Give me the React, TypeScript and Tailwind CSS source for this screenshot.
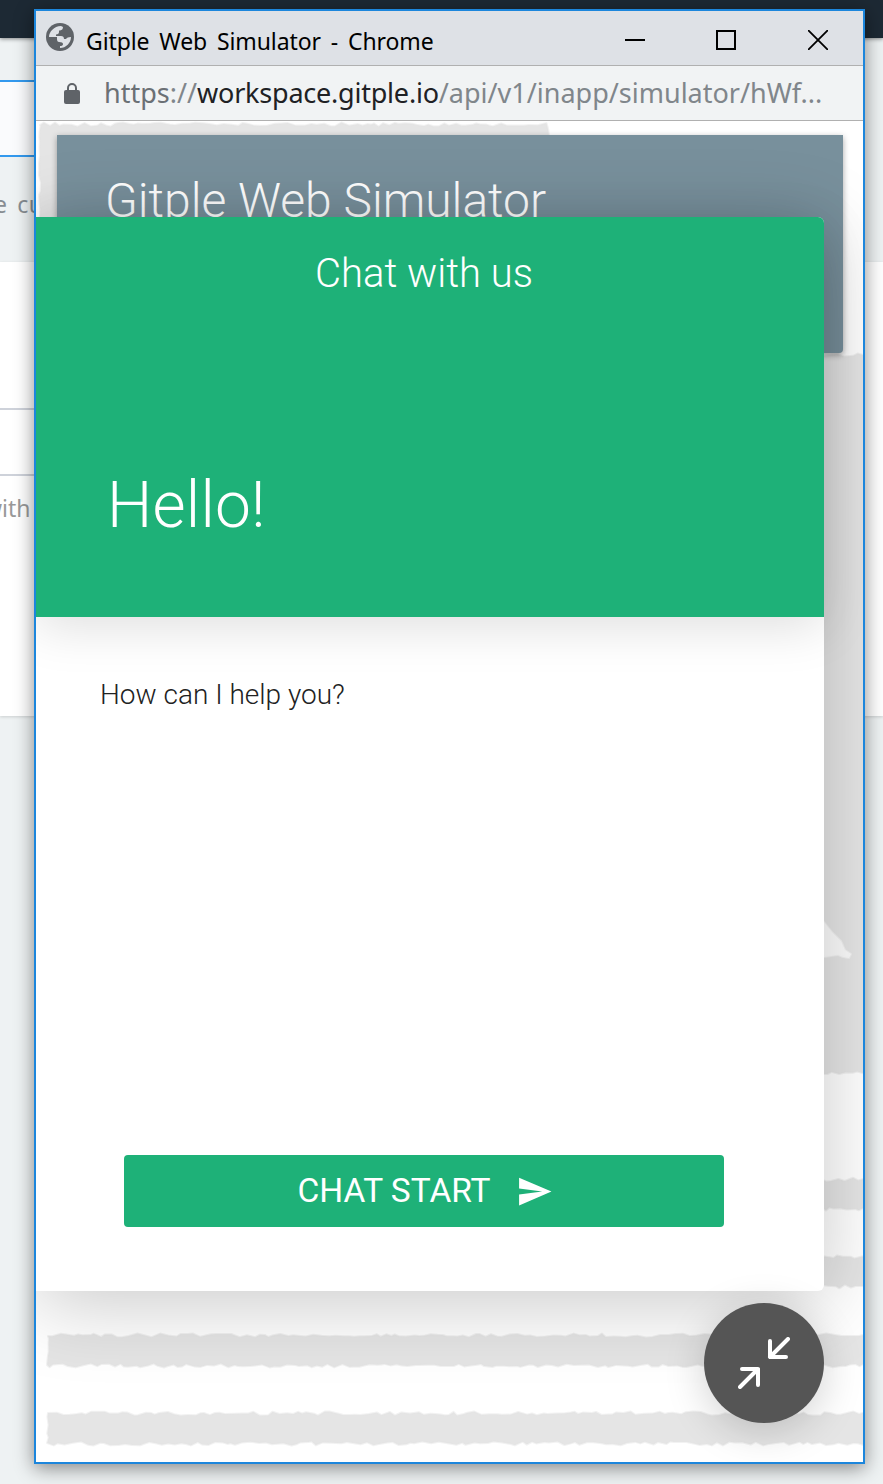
import React from 'react';
import { MdSend } from 'react-icons/md';

// Deterministic torn-paper outline of a rectangle.
function torn(x0: number, y0: number, x1: number, y1: number, seed: number): string {
  let s = seed * 7919;
  const rnd = () => {
    s = (s * 16807) % 2147483647;
    return s / 2147483647;
  };
  const pts: string[] = [];
  const j = () => (rnd() - 0.5) * 4;
  for (let x = x0; x < x1; x += 3 + rnd() * 6) pts.push(`${x.toFixed(1)},${(y0 + 1.5 + j()).toFixed(1)}`);
  for (let y = y0 + 2; y < y1 - 2; y += 3 + rnd() * 6) pts.push(`${(x1 + j()).toFixed(1)},${y.toFixed(1)}`);
  for (let x = x1; x > x0; x -= 3 + rnd() * 6) pts.push(`${x.toFixed(1)},${(y1 - 1.5 + j()).toFixed(1)}`);
  for (let y = y1 - 2; y > y0 + 2; y -= 3 + rnd() * 6) pts.push(`${(x0 + j() / 2).toFixed(1)},${y.toFixed(1)}`);
  return pts.join(' ');
}

const sheets: [number, number, number, number, number][] = [
  [4, 2, 512, 160, 11],
  [12, 233, 836, 954, 23],
  [12, 1057, 836, 1089, 37],
  [12, 1135, 836, 1167, 41],
  [12, 1213, 836, 1246, 59],
  [12, 1291, 836, 1324, 71],
];

function Sketch() {
  return (
    <svg className="absolute inset-0 h-full w-full" viewBox="0 0 827 1341" preserveAspectRatio="none">
      <g fill="#e5e5e5" stroke="#e5e5e5" strokeOpacity=".5" strokeWidth="2" strokeLinejoin="round">
        {sheets.map((s) => (
          <polygon key={s[4]} points={torn(...s)} />
        ))}
      </g>
      <path d="M770 780 L788 801 L796 811 L805 820 L809 829 L815 833 L813 837 L807 836 L802 834 L788 836 L760 836 Z" fill="#fcfcfc" stroke="#fcfcfc" strokeOpacity=".5" strokeWidth="2" strokeLinejoin="round" />
    </svg>
  );
}

function Backdrop() {
  return (
    <div className="flex h-full flex-col bg-[#eef2f3]">
      <div className="h-[38px] shrink-0 bg-[#1d2934] shadow-[0_1px_4px_rgba(0,0,0,0.45)]" />
      <div className="mt-[42px] h-[77px] w-[400px] shrink-0 border-y-2 border-[#3399ee] bg-[#fafbfd]" />
      <p className="-ml-[6px] mt-[31px] h-[33px] shrink-0 whitespace-nowrap font-['Noto_Sans'] text-[23px] leading-[32px] tracking-[0.6px] text-[#878d92] [word-spacing:3px]">
        e cu
      </p>
      <div className="mt-[41px] h-[454px] shrink-0 bg-white pt-[146px] shadow-[0_1px_3px_rgba(0,0,0,0.15)]">
        <div className="h-[68px] w-[400px] border-y-2 border-[#ced2da]" />
        <p className="-ml-[16px] mt-[16px] whitespace-nowrap font-['Noto_Sans'] text-[23px] leading-[32px] text-[#999]">
          with
        </p>
      </div>
    </div>
  );
}

function TitleBar() {
  return (
    <div className="flex h-[55px] shrink-0 items-center border-b border-[#b0b0b0] bg-[#dee1e6] pl-[10px]">
      <svg className="-mt-[2px] size-[28px]" viewBox="0 0 28 28">
        <circle cx="14" cy="14" r="14" fill="#5f6368" />
        <path d="M3 14C3 9 8 3 15 3L17 4Q17 7 14 7.5H13V9Q13 11 10 11.5V13H15Q18 13 18 16H20Q21 14 25 14C25 20 20 25 14 25V23Q17 23 17 21Q17 19 13 19Q11 19 11 16V14Z" fill="#dee1e6" />
      </svg>
      <h1 className="ml-[12px] mt-[5px] grow whitespace-nowrap font-['Noto_Sans'] text-[23px] leading-[32px] tracking-[-0.1px] text-black [word-spacing:4px]">
        Gitple Web Simulator - Chrome
      </h1>
      <div className="mr-[35px] mt-[4px] flex items-center">
        <svg className="mr-[71px] size-[20px]" viewBox="0 0 20 20"><path d="M0 10h20" stroke="#000" strokeWidth="2" /></svg>
        <svg className="mr-[72px] size-[20px]" viewBox="0 0 20 20"><path d="M1 1h18v18H1z" fill="none" stroke="#000" strokeWidth="2" /></svg>
        <svg className="size-[20px]" viewBox="0 0 20 20"><path d="M0 0l20 20M20 0L0 20" stroke="#000" strokeWidth="1.8" /></svg>
      </div>
    </div>
  );
}

function AddressBar() {
  return (
    <div className="flex h-[55px] shrink-0 items-center border-b border-[#b0b0b0] bg-[#f1f3f4] pl-[28px]">
      <svg className="h-[21px] w-[16px]" viewBox="0 0 16 21">
        <rect y="7" width="16" height="14" rx="2" fill="#5f6368" />
        <path d="M4 8V5a4 4 0 0 1 8 0v3" fill="none" stroke="#5f6368" strokeWidth="2" />
      </svg>
      <p className="ml-[24px] whitespace-nowrap font-['Noto_Sans'] text-[27px] leading-[36px] text-[#80868b]">
        <span className="text-[#6b7075]">https</span>://<span className="tracking-[-0.22px] text-[#202124]">workspace.gitple.io</span>/api/v1/inapp/simulator/hWf...
      </p>
    </div>
  );
}

function ChatWidget() {
  return (
    <section className="absolute left-0 top-[96px] flex h-[1074px] w-[788px] flex-col rounded-r-[6px] bg-white shadow-[0_12px_80px_rgba(0,0,0,0.22)]">
      <header className="h-[400px] shrink-0 rounded-tr-[6px] bg-[#1eb178] text-white shadow-[0_10px_50px_rgba(0,0,0,0.13)]">
        <h2 className="pr-[12px] pt-[33px] text-center font-[Roboto] text-[40px] font-light leading-[48px]">Chat with us</h2>
        <p className="pl-[71px] pt-[168px] font-[Roboto] text-[64px] font-light leading-[80px] tracking-[0.2px]">Hello!</p>
      </header>
      <p className="grow pl-[64px] pt-[61px] font-[Roboto] text-[28px] font-light leading-[34px] text-[#222]">How can I help you?</p>
      <button className="mb-[64px] ml-[88px] flex h-[72px] w-[600px] shrink-0 items-center justify-center rounded-[4px] bg-[#1eb178] pl-[2px] font-[Roboto] text-[33.5px] leading-[40px] text-white">
        CHAT START
        <MdSend className="ml-[25px] size-[37px]" />
      </button>
    </section>
  );
}

export default function App() {
  return (
    <main className="relative h-[1484px] w-[883px] overflow-hidden">
      <Backdrop />
      <div className="absolute left-[34px] top-[9px] flex h-[1455px] w-[831px] flex-col border-2 border-[#1c86dc] bg-white shadow-[0_4px_18px_rgba(0,0,0,0.45)]">
        <TitleBar />
        <AddressBar />
        <div className="relative grow overflow-hidden bg-white">
          <Sketch />
          <div className="relative ml-[21px] mt-[14px] h-[218px] w-[786px] rounded-b-[4px] bg-[#78909c] pl-[48px] pt-[38px] shadow-[0_2px_6px_rgba(0,0,0,0.35)]">
            <h2 className="whitespace-nowrap font-[Roboto] text-[48px] font-light leading-[56px] text-white">Gitple Web Simulator</h2>
          </div>
          <ChatWidget />
          <button className="absolute left-[668px] top-[1182px] flex size-[120px] items-center justify-center rounded-full bg-[#555] shadow-[0_8px_40px_rgba(0,0,0,0.18)]">
            <svg className="size-[52px]" viewBox="0 0 52 52" fill="none" stroke="#fff" strokeWidth="4" strokeLinecap="round" strokeLinejoin="round">
              <path d="M50 2L32 20M32 4v16h16M2 50l18-18M4 32h16v16" />
            </svg>
          </button>
        </div>
      </div>
    </main>
  );
}
